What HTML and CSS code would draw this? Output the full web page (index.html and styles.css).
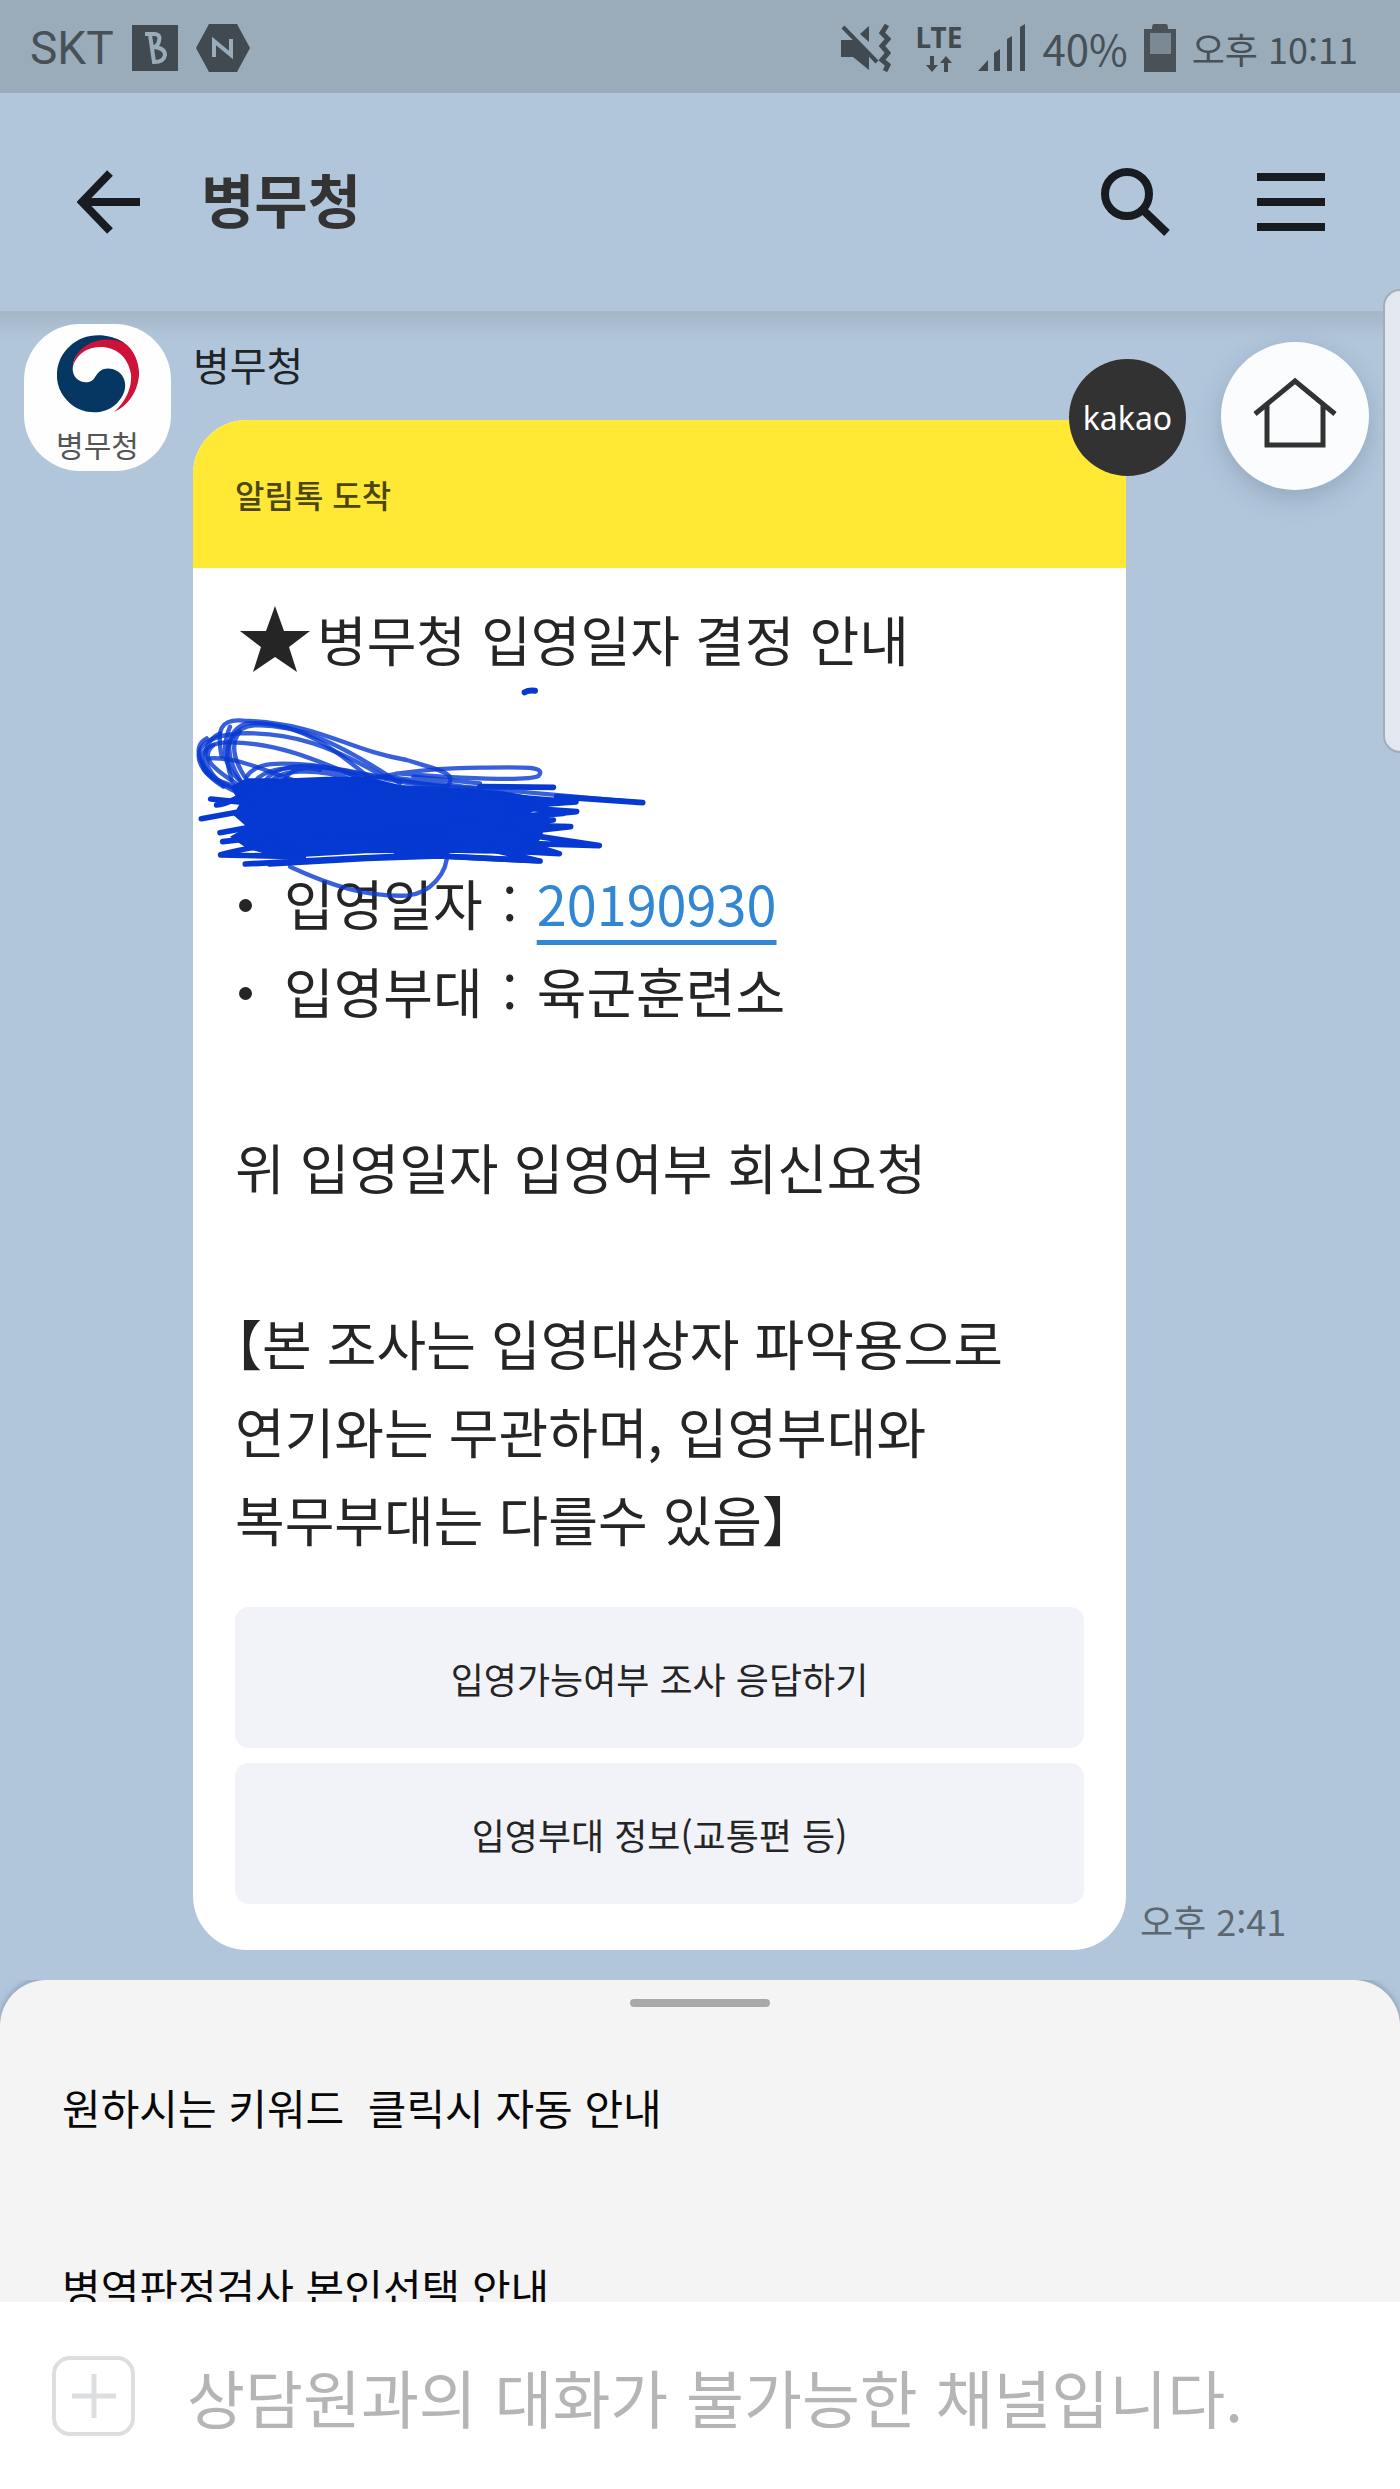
FILE: index.html
```html
<!DOCTYPE html>
<html lang="ko">
<head>
<meta charset="utf-8">
<meta name="viewport" content="width=device-width, initial-scale=1">
<title>병무청</title>
<link rel="stylesheet" href="styles.css">
</head>
<body>
<div class="status">
  <div class="status-group">
    <span class="carrier">SKT</span>
    <svg width="46" height="46" viewBox="0 0 46 46" aria-hidden="true">
      <rect width="46" height="46" fill="#414a51"/>
      <path d="M13 9H22Q29 9 27 16Q26 21 22 22Q33 23 33 30Q32 37 22 37L18 10M20 22H24" fill="none" stroke="#9aacb9" stroke-width="4"/>
    </svg>
    <svg width="54" height="48" viewBox="0 0 54 48" aria-hidden="true">
      <path d="M13 0H41L54 24L41 48H13L0 24Z" fill="#414a51"/>
      <path d="M18 33V17L35 31V15" fill="none" stroke="#9aacb9" stroke-width="4"/>
    </svg>
  </div>
  <div class="status-group status-right">
    <svg width="50" height="48" viewBox="0 0 50 48" aria-label="진동">
      <path d="M0 16H12L28 29V46L12 33H0Z M28 2V18L19 10Z" fill="#414a51"/>
      <path d="M2 3L36 38" stroke="#414a51" stroke-width="4"/>
      <path d="M46 1L41 9L47 15L41 22L47 29L41 36L47 41L44 47" fill="none" stroke="#414a51" stroke-width="5"/>
    </svg>
    <span class="network"><span>LTE</span>
      <svg width="28" height="16" viewBox="0 0 28 16" aria-hidden="true"><path d="M5 0H9V9H13L7 16L1 9H5Z M19 16H23V7H27L21 0L15 7H19Z" fill="#414a51"/></svg>
    </span>
    <svg width="48" height="48" viewBox="0 0 48 48" aria-hidden="true">
      <path d="M0 47L10 36V47Z M16 29L22 25V47H16Z M29 15L34 12V47H29Z M42 3L47 0V47H42Z" fill="#414a51"/>
    </svg>
    <span class="percent">40%</span>
    <svg width="32" height="48" viewBox="0 0 32 48" aria-hidden="true">
      <path d="M10 0H22Q24 0 24 5H32V48H0V5H8Q8 0 10 0Z" fill="#4b5257"/>
      <rect x="6" y="9" width="21" height="21" fill="#7a8994"/>
    </svg>
    <span class="clock">오후 10:11</span>
  </div>
</div>

<header class="topbar">
  <button class="icon-button" aria-label="뒤로">
    <svg width="64" height="64" viewBox="0 0 64 64"><path d="M33 3L5 32L33 61M5 32H63" fill="none" stroke="#181c20" stroke-width="8"/></svg>
  </button>
  <h1 class="title">병무청</h1>
  <button class="icon-button" aria-label="검색">
    <svg width="70" height="70" viewBox="0 0 70 70"><circle cx="26" cy="27" r="22" fill="none" stroke="#181c20" stroke-width="8"/><path d="M42 43L66 66" stroke="#181c20" stroke-width="8"/></svg>
  </button>
  <button class="icon-button menu" aria-label="메뉴">
    <svg width="68" height="60" viewBox="0 0 68 60"><path d="M0 5H68M0 30H68M0 55H68" stroke="#181c20" stroke-width="8"/></svg>
  </button>
</header>

<main class="chat">
  <div class="message">
    <div class="avatar">
      <svg width="82" height="80" viewBox="0 0 82 80" aria-hidden="true">
        <path d="M16 32C18 14 34 4 50 3C72 4 83 24 82 42C80 60 70 72 57 78C70 66 75 53 74 40C71 22 58 13 44 13C30 13 20 20 16 32Z" fill="#cf1238"/>
        <path d="M67 9C48 -3 26 0 13 12C-3 26 -4 50 8 64C20 80 44 83 58 71C67 63 71 52 66 43C61 34 48 32 42 38C37 43 38 46 32 48C22 50 14 42 16 32C17 14 42 -2 67 9Z" fill="#063763"/>
      </svg>
      <span class="avatar-name">병무청</span>
    </div>
    <div class="thread">
      <p class="sender">병무청</p>
      <div class="bubble-row">
        <article class="card">
          <h2 class="card-head">알림톡 도착</h2>
          <span class="badge">kakao</span>
          <div class="card-body">
            <div class="notice">
              <p class="headline"><svg width="72" height="66" viewBox="0 0 72 66" role="img" aria-label="별"><path d="M36 0L45 25H71L50 41L58 66L36 51L14 66L22 41L1 25H27Z" fill="#252525"/></svg>병무청 입영일자 결정 안내</p>
              <ul class="facts">
                <li>입영일자<span class="colon">:</span><a class="date" href="#calendar">20190930</a></li>
                <li>입영부대<span class="colon">:</span>육군훈련소</li>
              </ul>
              <p>위 입영일자 입영여부 회신요청</p>
              <p class="remark">【본 조사는 입영대상자 파악용으로<br>연기와는 무관하며, 입영부대와<br>복무부대는 다를수 있음】</p>
            </div>
            <div class="actions">
              <button class="action">입영가능여부 조사 응답하기</button>
              <button class="action">입영부대 정보(교통편 등)</button>
            </div>
          </div>
          <!-- pen marks drawn over the message -->
          <svg class="scribble" width="520" height="240" viewBox="0 0 1560 720" aria-hidden="true">
            <path d="M1034 67Q1045 60 1065 62" stroke-width="18"/>
            <path class="fill" d="M150 350L200 325L330 325L440 320L560 320L660 345L800 352L960 362L1060 380L1110 400L1050 430L1100 450L1040 475L1085 500L1060 540L920 550L760 548L560 550L300 565L200 535L150 500L200 470L160 435L180 400Z"/>
            <g stroke-width="13" stroke-opacity="0.8">
              <path d="M125 260C110 180 120 145 190 152C420 160 500 240 680 270C780 300 830 310 805 345"/>
              <path d="M155 330C120 220 160 170 230 165C360 165 480 220 660 340"/>
              <path d="M180 330C130 250 140 180 200 160C360 150 480 250 570 325"/>
              <path d="M130 350C20 280 30 200 180 190C340 185 460 230 620 325"/>
              <path d="M180 370C30 310 40 220 140 217C280 215 400 265 540 325"/>
              <path d="M130 345C50 280 70 215 120 190M170 350C60 320 50 280 90 265C180 260 270 310 340 330"/>
              <path d="M150 350C60 310 30 230 80 205M175 345C90 290 60 260 100 225M190 340C120 290 130 220 150 170M200 330C160 270 150 220 180 185"/>
              <path d="M200 320C230 270 320 280 390 285C520 300 740 355 900 355"/>
              <path d="M220 340C260 280 400 280 560 325M270 340C290 300 400 290 520 330"/>
              <path d="M250 350C260 300 340 275 450 295C560 310 660 345 800 350M310 340C320 300 370 285 420 300"/>
              <path d="M500 350C600 310 740 295 900 293C1040 290 1100 290 1075 318C1040 335 850 325 650 310"/>
              <path d="M620 320L850 350L1110 373L1388 398M700 320L900 340"/>
              <path d="M330 590C460 650 560 680 680 677C750 670 805 610 801 545"/>
            </g>
            <g stroke-width="17">
              <path d="M900 350L1120 352M1130 380L1388 398"/>
              <path d="M92 387L220 400M110 405Q130 405 170 385M64 446L220 418M120 488L300 455M128 515L300 495M122 554C240 520 400 510 600 510M122 555L370 560M196 582L520 565L800 552"/>
              <path d="M860 370L1188 396L980 410L1190 425L980 445L1120 450L970 465L1172 470L990 490L1080 500L1258 527L1030 520L1080 533L1138 551L940 540L1075 572L650 552"/>
              <path d="M270 582L560 565L780 558L1080 573M180 360L800 370L1150 430L400 480L1080 490L300 530L1060 545"/>
            </g>
          </svg>
        </article>
        <time class="sent" datetime="14:41">오후 2:41</time>
      </div>
    </div>
  </div>
  <button class="home" aria-label="홈">
    <svg width="84" height="72" viewBox="0 0 84 72"><path d="M2 37L42 4L82 37M14 28V68H70V28" fill="none" stroke="#303332" stroke-width="5"/></svg>
  </button>
  <div class="edge-handle"></div>
</main>

<section class="sheet">
  <div class="grip"></div>
  <p>원하시는 키워드&nbsp; 클릭시 자동 안내</p>
  <p>병역판정검사 본인선택 안내</p>
</section>

<footer class="composer">
  <button class="add" aria-label="추가" disabled>
    <svg width="44" height="44" viewBox="0 0 44 44"><path d="M22 0V44M0 22H44" stroke="#dcdedf" stroke-width="5"/></svg>
  </button>
  <input class="entry" type="text" aria-label="메시지" placeholder="상담원과의 대화가 불가능한 채널입니다." disabled>
</footer>
</body>
</html>
```
FILE: styles.css
```css
* { box-sizing: border-box; }

body {
  margin: 0;
  min-height: 100vh;
  display: flex;
  flex-direction: column;
  background: #b1c6db;
  color: #252525;
  font-family: "Noto Sans CJK KR", "Noto Sans", sans-serif;
}

h1, h2, p, ul { margin: 0; padding: 0; }

button {
  border: 0;
  padding: 0;
  background: none;
  color: inherit;
  font: inherit;
  display: flex;
  align-items: center;
  justify-content: center;
}

svg { display: block; flex: none; }

/* status bar */
.status {
  display: flex;
  justify-content: space-between;
  align-items: center;
  height: 93px;
  padding: 2px 42px 0 30px;
  background: #9aacb9;
  color: #485057;
}

.status-group { display: flex; align-items: center; gap: 18px; white-space: nowrap; }
.status-right { gap: 16px; }
.carrier { font: 46px/48px Roboto, sans-serif; }
.network {
  display: flex;
  flex-direction: column;
  align-items: center;
  gap: 6px;
  margin-left: 8px;
  color: #414a51;
  font: bold 28px/26px "Noto Sans", sans-serif;
}
.percent { font-size: 42px; line-height: 48px; }
.clock { font-size: 36px; line-height: 48px; }

/* title bar */
.topbar {
  display: flex;
  align-items: center;
  height: 218px;
  padding: 0 75px 0 77px;
}
.title {
  flex: 1;
  margin-left: 60px;
  padding-bottom: 8px;
  color: #333;
  font-size: 58px;
  line-height: 80px;
}
.menu { margin-left: 86px; }

/* conversation */
.chat {
  position: relative;
  flex: 1 0 auto;
  padding: 13px 24px 30px;
  background: linear-gradient(#a4b6c7, #b1c6db 28px);
}
.message { display: flex; align-items: flex-start; gap: 22px; }

.avatar {
  flex: none;
  width: 147px;
  height: 147px;
  display: flex;
  flex-direction: column;
  align-items: center;
  gap: 12px;
  padding-top: 10px;
  border-radius: 56px;
  background: #fefefe;
}
.avatar-name { color: #555; font-size: 30px; line-height: 36px; }

.thread { flex: 1; min-width: 0; }
.sender {
  margin-bottom: 16px;
  color: #202428;
  font-size: 40px;
  line-height: 80px;
}
.bubble-row { display: flex; align-items: flex-end; gap: 14px; }

.card {
  position: relative;
  flex: 0 1 933px;
  border-radius: 54px;
  background: #fff;
}
.card-head {
  padding: 0 42px;
  border-radius: 54px 0 0 0;
  background: #ffe935;
  color: #4b4610;
  font-size: 32px;
  font-weight: 500;
  line-height: 148px;
}
.badge {
  position: absolute;
  top: -61px;
  right: -60px;
  width: 117px;
  height: 117px;
  border-radius: 50%;
  background: #323232;
  color: #fff;
  font: 32px/117px "Noto Sans", sans-serif;
  text-align: center;
}
.card-body { padding: 27px 42px 46px; }
.notice {
  font-size: 54px;
  line-height: 88px;
}
.headline { display: flex; align-items: center; gap: 6px; padding-left: 4px; }
.facts { margin: 176px 0 88px; list-style: none; }
.facts li { display: flex; align-items: center; }
.facts li::before {
  content: "";
  width: 13px;
  height: 13px;
  margin: 4px 32px 0 4px;
  border-radius: 50%;
  background: #252525;
}
.colon { width: 54px; text-align: center; }
.date {
  color: #3187d3;
  text-decoration: underline;
  text-decoration-thickness: 5px;
  text-underline-offset: 14px;
}
.remark {
  margin-top: 88px;
  text-spacing-trim: trim-start;
}
.actions {
  display: flex;
  flex-direction: column;
  gap: 15px;
  margin-top: 44px;
}
.action {
  height: 141px;
  border-radius: 14px;
  background: #f2f3f8;
  font-size: 36px;
}
.sent {
  flex: none;
  padding-bottom: 8px;
  color: #5c6771;
  font-size: 36px;
  line-height: 44px;
}

.scribble {
  position: absolute;
  top: 250px;
  left: -13px;
  fill: none;
  stroke: #0638d2;
  stroke-linecap: round;
  stroke-linejoin: round;
  pointer-events: none;
}
.scribble .fill { fill: #0638d2; stroke: none; }

.home {
  position: absolute;
  top: 31px;
  right: 31px;
  width: 148px;
  height: 148px;
  padding-bottom: 6px;
  border-radius: 50%;
  background: #fbfcfe;
  box-shadow: 0 8px 24px rgba(60, 80, 100, 0.25);
}
.edge-handle {
  position: absolute;
  top: -22px;
  right: 0;
  width: 17px;
  height: 464px;
  border: 2px solid #a3adb9;
  border-right: 0;
  border-radius: 18px 0 0 18px;
  background: #e3e7f0;
}

/* keyword sheet, scrolled part-way */
.sheet {
  flex: none;
  display: flex;
  flex-direction: column;
  gap: 116px;
  height: 322px;
  padding: 19px 62px 0;
  overflow: hidden;
  border-radius: 46px 46px 0 0;
  background: #f4f4f4;
  box-shadow: 0 -2px 6px rgba(80, 100, 120, 0.4);
  color: #080808;
  font-size: 42px;
  line-height: 64px;
}
.sheet p { flex: none; }
.grip {
  flex: none;
  align-self: center;
  width: 140px;
  height: 8px;
  margin-bottom: -48px;
  border-radius: 4px;
  background: #a9a9a9;
}

/* message entry */
.composer {
  position: relative;
  flex: none;
  display: flex;
  align-items: center;
  gap: 52px;
  height: 187px;
  padding: 0 52px;
  background: #fff;
}
.add {
  flex: none;
  width: 83px;
  height: 80px;
  border: 4px solid #dcdedf;
  border-radius: 18px;
}
.entry {
  flex: 1;
  min-width: 0;
  padding: 0;
  border: 0;
  background: none;
  font: 63px/96px "Noto Sans CJK KR", sans-serif;
}
.entry::placeholder { color: #b5b5b5; opacity: 1; }
```
